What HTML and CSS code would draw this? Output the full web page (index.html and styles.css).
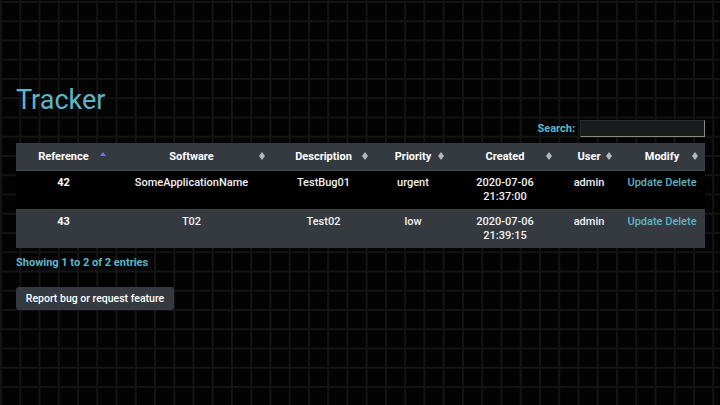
FILE: index.html
```html
<!DOCTYPE html>
<html>
<head>
<meta charset="utf-8">
<link rel="stylesheet" href="styles.css">
</head>
<body>
<div class="page">
  <h1 class="title">Tracker</h1>
  <div class="search-row">
    <label class="search-label">Search:</label>
    <input class="search-input" type="text">
  </div>
  <table class="tracker">
    <colgroup>
      <col style="width:95px"><col style="width:161px"><col style="width:103px"><col style="width:76px"><col style="width:108px"><col style="width:60px"><col style="width:86px">
    </colgroup>
    <thead>
      <tr>
        <th class="sorted">Reference</th>
        <th class="sortable">Software</th>
        <th class="sortable">Description</th>
        <th class="sortable">Priority</th>
        <th class="sortable">Created</th>
        <th class="sortable">User</th>
        <th class="sortable">Modify</th>
      </tr>
    </thead>
    <tbody>
      <tr class="odd">
        <td class="ref">42</td>
        <td>SomeApplicationName</td>
        <td>TestBug01</td>
        <td>urgent</td>
        <td>2020-07-06<br>21:37:00</td>
        <td>admin</td>
        <td><a class="link">Update</a> <a class="link">Delete</a></td>
      </tr>
      <tr class="even">
        <td class="ref">43</td>
        <td>T02</td>
        <td>Test02</td>
        <td>low</td>
        <td>2020-07-06<br>21:39:15</td>
        <td>admin</td>
        <td><a class="link">Update</a> <a class="link">Delete</a></td>
      </tr>
    </tbody>
  </table>
  <div class="info">Showing 1 to 2 of 2 entries</div>
  <button class="report">Report bug or request feature</button>
</div>
</body>
</html>
```

FILE: styles.css
```css
html, body {
  margin: 0;
  padding: 0;
  height: 100%;
}
body {
  background-color: #030303;
  background-image:
    linear-gradient(to right, #141414 2px, transparent 2px),
    linear-gradient(to bottom, #141414 2px, transparent 2px);
  background-size: 19.25px 19.25px;
  background-position: 0 1px;
  font-family: Roboto, "Liberation Sans", sans-serif;
  color: #fff;
}
.page {
  width: 689px;
  padding: 0 0 0 16px;
}
.title {
  margin: 0;
  padding-top: 84px;
  font-size: 27px;
  line-height: 32px;
  font-weight: 400;
  color: #5db6c7;
}
.search-row {
  display: flex;
  justify-content: flex-end;
  align-items: center;
  gap: 5px;
  margin-top: 3px;
  height: 19px;
}
.search-label {
  font-size: 11px;
  font-weight: 700;
  color: #5db6c7;
}
.search-input {
  box-sizing: border-box;
  width: 125px;
  height: 17px;
  margin: 0;
  padding: 0;
  background: #1a1b1c;
  border: 1px solid;
  border-color: #2a2a2a #8a8a8a #8a8a8a #2a2a2a;
}
.tracker {
  margin-top: 5px;
  width: 689px;
  border-collapse: collapse;
  table-layout: fixed;
  font-size: 11px;
  font-weight: 700;
}
.tracker th {
  position: relative;
  background: #343a40;
  color: #fff;
  height: 27px;
  padding: 0 8px;
  line-height: 15px;
  border-bottom: 1px solid #454d55;
  box-sizing: border-box;
  text-align: center;
}
.tracker th.sortable::after {
  content: "";
  position: absolute;
  right: 7px;
  top: 9px;
  width: 0;
  height: 0;
  border-left: 3px solid transparent;
  border-right: 3px solid transparent;
  border-bottom: 4px solid #b4b9bd;
}
.tracker th.sortable::before {
  content: "";
  position: absolute;
  right: 7px;
  top: 13px;
  width: 0;
  height: 0;
  border-left: 3px solid transparent;
  border-right: 3px solid transparent;
  border-top: 4px solid #b4b9bd;
}
.tracker th.sorted::after {
  content: "";
  position: absolute;
  right: 5px;
  top: 9px;
  width: 0;
  height: 0;
  border-left: 3px solid transparent;
  border-right: 3px solid transparent;
  border-bottom: 4px solid #7473e0;
}
.tracker td {
  text-align: center;
  vertical-align: top;
  padding: 5px 4px;
  line-height: 14px;
  height: 28px;
  color: #f2f2f2;
  font-weight: 500;
}
.tracker td.ref {
  font-weight: 700;
  color: #fff;
}
.tracker tr.odd td {
  background: #000;
  border-bottom: 1px solid #3a3f44;
}
.tracker tr.even td {
  background: #343a40;
}
.link {
  color: #5db6c7;
}
.info {
  margin-top: 8px;
  font-size: 11px;
  font-weight: 700;
  color: #5db6c7;
  line-height: 14px;
}
.report {
  display: block;
  margin-top: 17px;
  background: #343a40;
  color: #fff;
  border: none;
  border-radius: 3px;
  height: 23px;
  width: 158px;
  padding: 0;
  font-family: Roboto, "Liberation Sans", sans-serif;
  font-size: 10.5px;
  font-weight: 500;
  text-align: center;
}
```
